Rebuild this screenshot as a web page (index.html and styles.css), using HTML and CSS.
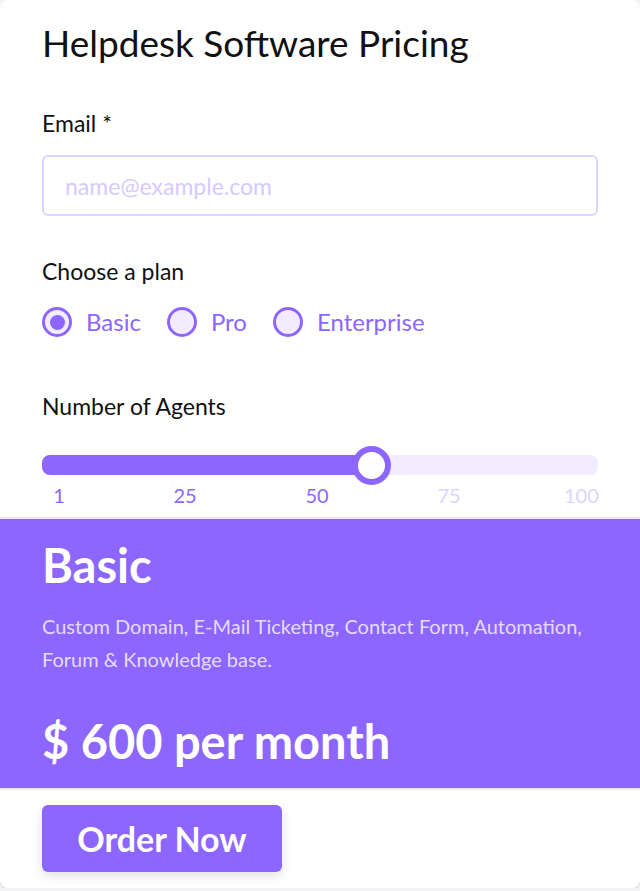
FILE: index.html
```html
<!DOCTYPE html>
<html>
<head>
  <title>Helpdesk Software Pricing</title>
  <link rel="stylesheet" href="styles.css">
</head>
<body>
  <div class="card">
    <div class="form">
      <h1 class="heading">Helpdesk Software Pricing</h1>
      <label class="field-label" for="email">Email *</label>
      <input class="email" type="email" id="email" placeholder="name@example.com">

      <div class="field-label plan-label">Choose a plan</div>
      <div class="plans">
        <label class="plan"><span class="radio checked"></span>Basic</label>
        <label class="plan"><span class="radio"></span>Pro</label>
        <label class="plan"><span class="radio"></span>Enterprise</label>
      </div>

      <div class="field-label agents-label">Number of Agents</div>
      <div class="slider">
        <div class="track">
          <div class="fill" style="width: 59.2%"></div>
          <div class="thumb" style="left: 59.2%"></div>
        </div>
        <div class="ticks">
          <span class="on">1</span>
          <span class="on">25</span>
          <span class="on">50</span>
          <span>75</span>
          <span>100</span>
        </div>
      </div>
    </div>

    <div class="summary">
      <h2 class="plan-name">Basic</h2>
      <p class="features">Custom Domain, E-Mail Ticketing, Contact Form, Automation, Forum &amp; Knowledge base.</p>
      <div class="price">$ 600 per month</div>
    </div>

    <div class="actions">
      <button class="order">Order Now</button>
    </div>
  </div>
</body>
</html>
```

FILE: styles.css
```css
body {
  margin: 0;
  font-family: Lato, "Noto Sans", sans-serif;
  background-color: #f3f3f5;
}
.card {
  width: 640px;
  height: 888px;
  background-color: #fff;
  border-radius: 8px;
  box-shadow: 0 1px 3px rgba(0, 0, 0, 0.12);
  overflow: hidden;
}
.form {
  padding: 21px 42px 0;
}
.heading {
  margin: 0 0 44px;
  font-size: 37px;
  font-weight: 400;
  line-height: 44px;
  color: #111;
}
.field-label {
  display: block;
  font-size: 23px;
  line-height: 28px;
  color: #111;
}
.email {
  display: block;
  box-sizing: border-box;
  width: 100%;
  height: 61px;
  margin-top: 18px;
  padding: 0 21px;
  border: 2px solid #ddd3ff;
  border-radius: 6px;
  font-family: inherit;
  font-size: 23px;
  outline: none;
}
.email::placeholder {
  color: #d6c9ff;
}
.plan-label {
  margin-top: 41px;
}
.plans {
  display: flex;
  gap: 26px;
  margin-top: 22px;
}
.plan {
  display: flex;
  align-items: center;
  gap: 14px;
  font-size: 24px;
  line-height: 30px;
  color: #8c66ff;
}
.radio {
  box-sizing: border-box;
  width: 30px;
  height: 30px;
  border: 3px solid #8c66ff;
  border-radius: 50%;
  background-color: #f1ecff;
  position: relative;
}
.radio.checked::after {
  content: "";
  position: absolute;
  left: 4.5px;
  top: 4.5px;
  width: 15px;
  height: 15px;
  border-radius: 50%;
  background-color: #8c66ff;
}
.agents-label {
  margin-top: 55px;
}
.slider {
  margin-top: 35px;
}
.track {
  position: relative;
  height: 20px;
  border-radius: 8px;
  background-color: #f1ecff;
}
.fill {
  height: 100%;
  border-radius: 8px 0 0 8px;
  background-color: #8c66ff;
}
.thumb {
  position: absolute;
  top: 50%;
  width: 39px;
  height: 39px;
  box-sizing: border-box;
  margin: -19.5px 0 0 -19.5px;
  border: 6px solid #8c66ff;
  border-radius: 50%;
  background-color: #fff;
}
.ticks {
  display: grid;
  grid-template-columns: 34px 218px 46px 224px 34px;
  padding-top: 8px;
  font-size: 20px;
  line-height: 24px;
  color: #ddd3ff;
}
.ticks span {
  text-align: center;
}
.ticks span:nth-child(4) {
  padding-right: 6px;
}
.ticks .on {
  color: #8c66ff;
}
.summary {
  margin-top: 10px;
  padding: 18px 42px 19px;
  border-top: 2px solid #ebe5ff;
  border-bottom: 2px solid #ebe5ff;
  background-color: #8c66ff;
  color: #fff;
}
.plan-name {
  margin: 0;
  font-size: 47px;
  font-weight: 700;
  line-height: 56px;
}
.features {
  margin: 17px 0 0;
  font-size: 20px;
  line-height: 33px;
  color: #e4dcff;
}
.price {
  margin-top: 37px;
  font-size: 47px;
  font-weight: 700;
  line-height: 56px;
}
.actions {
  padding: 15px 42px 0;
}
.order {
  width: 240px;
  height: 67px;
  border: none;
  border-radius: 6px;
  background-color: #8c66ff;
  color: #fff;
  font-family: inherit;
  font-size: 34px;
  font-weight: 700;
  box-shadow: 0 4px 12px rgba(0, 0, 0, 0.12);
  cursor: pointer;
}
```
